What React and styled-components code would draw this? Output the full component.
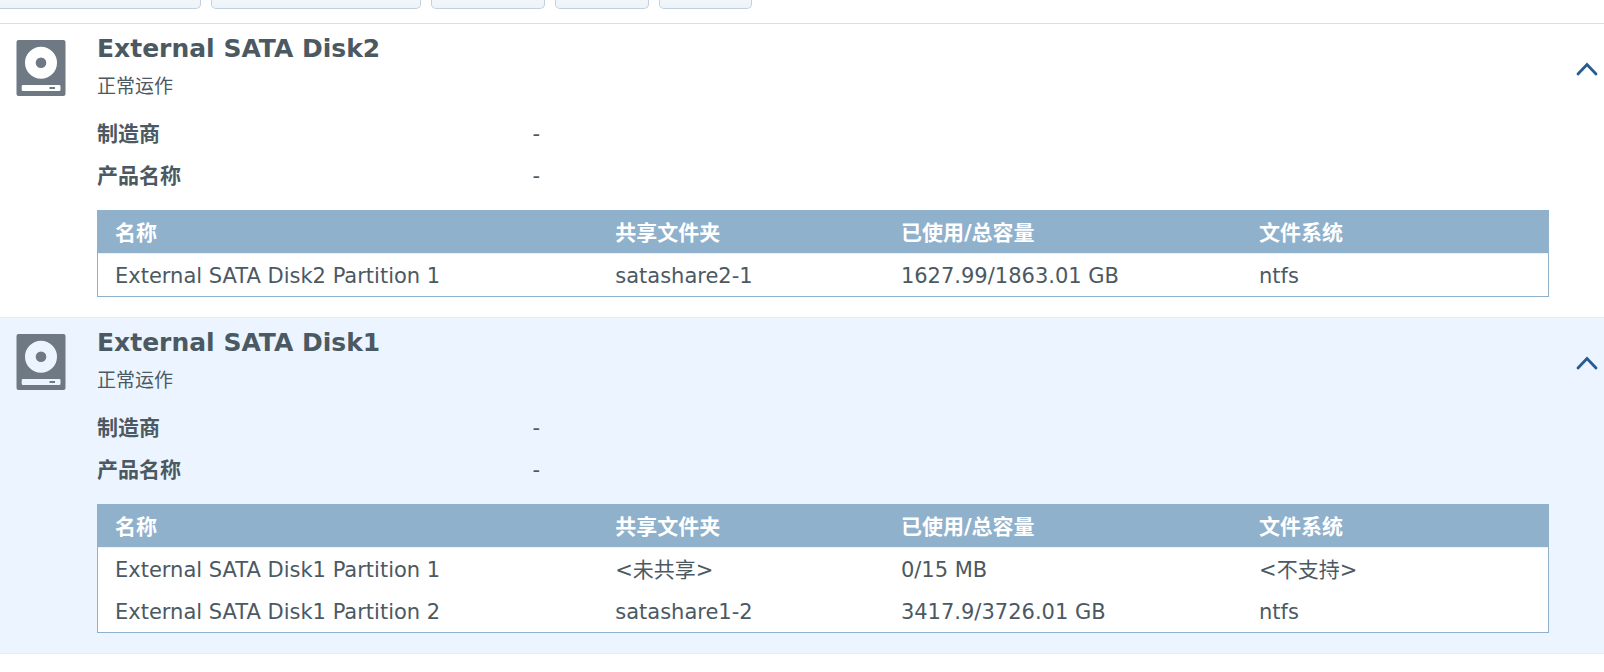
import React, { useState } from 'react';
import styled, { createGlobalStyle, ThemeProvider } from 'styled-components';

const theme = {
  colors: {
    text: '#4b5963',
    icon: '#6e7983',
    link: '#275b91',
    white: '#ffffff',
    selected: '#ecf5ff',
    tableHead: '#8fb1cc',
    tableLine: '#edf2f7',
    line: '#d4dfe9',
    panelLine: '#e6ecf2',
    buttonBorder: '#c3d0de',
    buttonTop: '#f1f6fa',
    buttonBottom: '#edf4f9',
  },
  fonts: {
    family: "'DejaVu Sans', 'Noto Sans CJK SC', sans-serif",
    title: '25px',
    base: '21px',
    small: '19px',
  },
};

const GlobalStyle = createGlobalStyle`
  body {
    margin: 0;
    background-color: ${({ theme }) => theme.colors.white};
    color: ${({ theme }) => theme.colors.text};
    font-family: ${({ theme }) => theme.fonts.family};
    font-size: ${({ theme }) => theme.fonts.base};
  }
`;

const Toolbar = styled.div`
  display: flex;
  gap: 10px;
  padding-bottom: 14px;
  border-bottom: 1px solid ${({ theme }) => theme.colors.line};
`;
const ToolbarButton = styled.button`
  box-sizing: border-box;
  width: ${({ $width }) => $width}px;
  height: 9px;
  padding: 0;
  background: linear-gradient(
    ${({ theme }) => theme.colors.buttonTop},
    ${({ theme }) => theme.colors.buttonBottom}
  );
  border: 1px solid ${({ theme }) => theme.colors.buttonBorder};
  border-top: 0;
  border-radius: 0 0 5px 5px;
  cursor: pointer;

  &:first-child {
    border-left: 0;
    border-bottom-left-radius: 0;
  }
`;
const Panel = styled.section`
  display: grid;
  grid-template-columns: 97px 1fr 55px;
  padding: 10px 0 20px;
  background-color: ${({ theme, $selected }) =>
    $selected ? theme.colors.selected : theme.colors.white};
  border-bottom: 1px solid ${({ theme }) => theme.colors.panelLine};
`;
const IconCell = styled.div`
  padding: 6px 0 0 16px;
  color: ${({ theme }) => theme.colors.icon};

  svg {
    display: block;
  }
`;
const Title = styled.h2`
  margin: 0;
  font-size: ${({ theme }) => theme.fonts.title};
  line-height: 30px;
`;
const Status = styled.p`
  margin: 8px 0 13px;
  font-size: ${({ theme }) => theme.fonts.small};
  line-height: 28px;
`;
const Details = styled.dl`
  display: grid;
  grid-template-columns: 30% 1fr;
  margin: 0 0 13px;
  line-height: 42px;

  dt {
    font-weight: bold;
  }
  dd {
    margin: 0;
  }
`;
const Table = styled.table`
  width: 100%;
  table-layout: fixed;
  background-color: ${({ theme }) => theme.colors.white};
  border: 1px solid ${({ theme }) => theme.colors.tableHead};
  border-spacing: 0;
  line-height: 40px;
`;
const HeadCell = styled.th`
  box-sizing: border-box;
  width: ${({ $width }) => $width};
  padding: 2px 0 0 17px;
  background-color: ${({ theme }) => theme.colors.tableHead};
  border-bottom: 1px solid ${({ theme }) => theme.colors.tableLine};
  color: ${({ theme }) => theme.colors.white};
  text-align: left;
`;
const Cell = styled.td`
  padding: 2px 0 0 17px;
`;
const Toggle = styled.button`
  display: flex;
  align-items: center;
  justify-content: center;
  justify-self: end;
  width: 34px;
  height: 34px;
  margin-top: 18px;
  padding: 0;
  background: none;
  border: 0;
  color: ${({ theme }) => theme.colors.link};
  cursor: pointer;

  svg {
    transform: ${({ $open }) => ($open ? 'none' : 'rotate(180deg)')};
  }
`;

const toolbarWidths = [201, 210, 114, 94, 93];

const columns = [
  { key: 'name', label: '名称', width: '34.5%' },
  { key: 'share', label: '共享文件夹', width: '19.7%' },
  { key: 'usage', label: '已使用/总容量', width: '24.7%' },
  { key: 'fs', label: '文件系统', width: 'auto' },
];

const disks = [
  {
    id: 'disk2',
    name: 'External SATA Disk2',
    partitions: [
      {
        name: 'External SATA Disk2 Partition 1',
        share: 'satashare2-1',
        usage: '1627.99/1863.01 GB',
        fs: 'ntfs',
      },
    ],
  },
  {
    id: 'disk1',
    name: 'External SATA Disk1',
    selected: true,
    partitions: [
      {
        name: 'External SATA Disk1 Partition 1',
        share: '<未共享>',
        usage: '0/15 MB',
        fs: '<不支持>',
      },
      {
        name: 'External SATA Disk1 Partition 2',
        share: 'satashare1-2',
        usage: '3417.9/3726.01 GB',
        fs: 'ntfs',
      },
    ],
  },
];

const DiskIcon = () => (
  <svg width="50" height="56" viewBox="0 0 50 56" fill="currentColor" aria-hidden="true">
    <path
      fillRule="evenodd"
      d="M2.5 0h45a2 2 0 0 1 2 2v52a2 2 0 0 1-2 2h-45a2 2 0 0 1-2-2V2a2 2 0 0 1 2-2zM25 6.7a16 16 0 1 0 0 32a16 16 0 1 0 0-32zM7 45a1.3 1.3 0 0 0-1.3 1.3v3.4A1.3 1.3 0 0 0 7 51h36.2a1.3 1.3 0 0 0 1.3-1.3v-3.4A1.3 1.3 0 0 0 43.2 45z"
    />
    <circle cx="25" cy="22.7" r="5.3" />
    <rect x="33.5" y="47" width="5.5" height="2" />
  </svg>
);

const ChevronIcon = () => (
  <svg width="22" height="14" viewBox="0 0 22 14" fill="none" aria-hidden="true">
    <path d="M2 12L11 2.5L20 12" stroke="currentColor" strokeWidth="2.8" strokeLinecap="round" />
  </svg>
);

const DiskPanel = ({ disk }) => {
  const [isOpen, setIsOpen] = useState(true);

  return (
    <Panel $selected={disk.selected}>
      <IconCell>
        <DiskIcon />
      </IconCell>
      <div>
        <Title>{disk.name}</Title>
        <Status>正常运作</Status>
        {isOpen && (
          <>
            <Details>
              <dt>制造商</dt>
              <dd>-</dd>
              <dt>产品名称</dt>
              <dd>-</dd>
            </Details>
            <Table>
              <thead>
                <tr>
                  {columns.map((col) => (
                    <HeadCell key={col.key} $width={col.width} scope="col">
                      {col.label}
                    </HeadCell>
                  ))}
                </tr>
              </thead>
              <tbody>
                {disk.partitions.map((partition) => (
                  <tr key={partition.name}>
                    {columns.map((col) => (
                      <Cell key={col.key}>{partition[col.key]}</Cell>
                    ))}
                  </tr>
                ))}
              </tbody>
            </Table>
          </>
        )}
      </div>
      <Toggle
        type="button"
        $open={isOpen}
        aria-expanded={isOpen}
        aria-label={disk.name}
        onClick={() => setIsOpen((prev) => !prev)}
      >
        <ChevronIcon />
      </Toggle>
    </Panel>
  );
};

const App = () => (
  <ThemeProvider theme={theme}>
    <GlobalStyle />
    <Toolbar>
      {toolbarWidths.map((width, index) => (
        <ToolbarButton key={index} type="button" $width={width} aria-label={`操作 ${index + 1}`} />
      ))}
    </Toolbar>
    <main>
      {disks.map((disk) => (
        <DiskPanel key={disk.id} disk={disk} />
      ))}
    </main>
  </ThemeProvider>
);

export default App;
